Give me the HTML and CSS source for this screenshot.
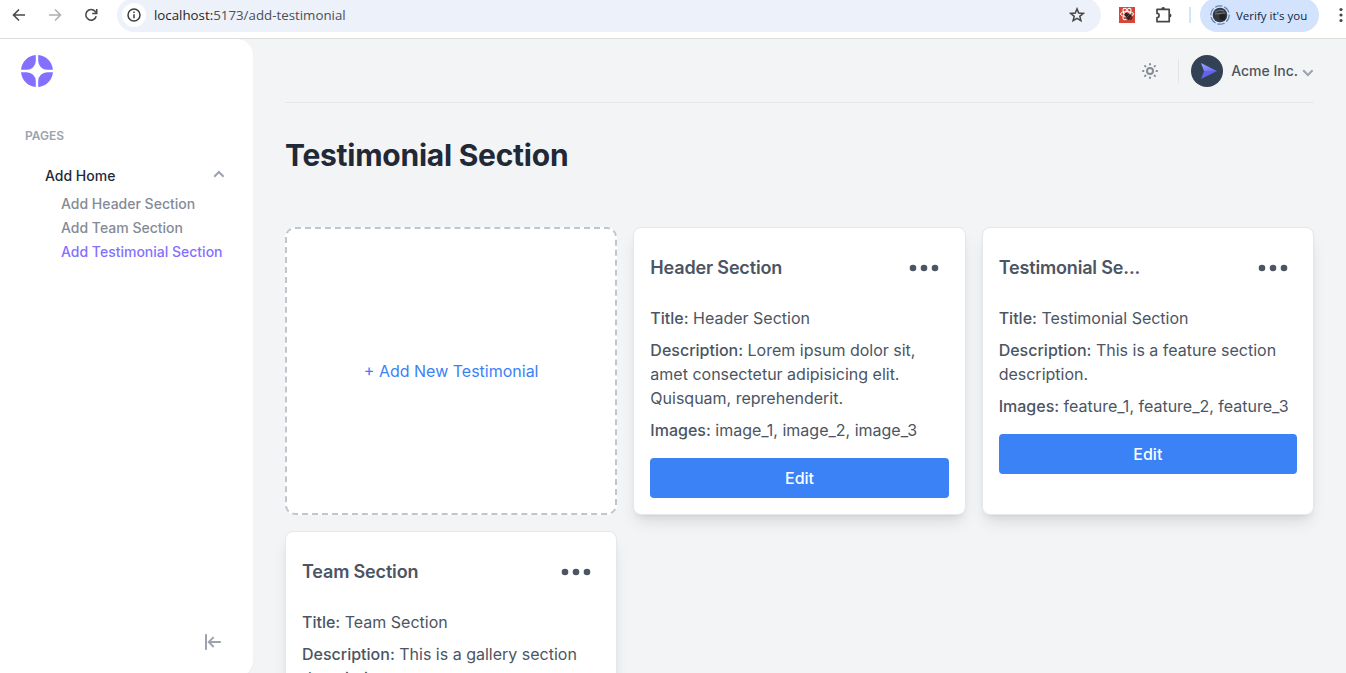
FILE: index.html
```html
<!DOCTYPE html>
<html lang="en">
<head>
<meta charset="utf-8">
<title>Testimonial Section</title>
<link rel="stylesheet" href="styles.css">
</head>
<body>
<header class="browser">
  <div class="nav-icons">
    <svg width="14" height="14" viewBox="0 0 14 14" fill="none" stroke="#474747" stroke-width="1.6"><path d="M13 7H1.800M7 1.500 1.500 7 7 12.500"/></svg>
    <svg width="14" height="14" viewBox="0 0 14 14" fill="none" stroke="#b0b0b0" stroke-width="1.600"><path d="M1 7h11.200M7 1.500 12.500 7 7 12.500"/></svg>
    <svg width="14" height="14" viewBox="0 0 14 14" fill="none" stroke="#474747" stroke-width="1.600"><path d="M12.200 8.300a5.300 5.300 0 1 1-1-4.800L12.600 5"/><path d="M12.700 1v4.500H8.200"/></svg>
  </div>
  <div class="address">
    <span class="site-info"><svg width="14" height="14" viewBox="0 0 14 14" fill="none" stroke="#3c3c3c" stroke-width="1.500"><circle cx="7" cy="7" r="6"/><path d="M7 6.200v4M7 3.500V5"/></svg></span>
    <span class="url"><b>localhost:</b>5173/add-testimonial</span>
    <svg class="star" width="16" height="16" viewBox="0 0 16 16" fill="none" stroke="#474747" stroke-width="1.500"><path d="m8 1.900 1.700 4.200 4.600.3-3.500 2.900 1.100 4.400L8 11.300l-3.900 2.400 1.100-4.400-3.500-2.900 4.600-.3z"/></svg>
  </div>
  <svg class="ext" width="16" height="16" viewBox="0 0 16 16"><path fill="#d8463a" d="M0 0h16v16H0z"/><g fill="none" stroke="#fff" stroke-width="1"><ellipse cx="8" cy="7" rx="6.500" ry="2.500"/><ellipse cx="8" cy="7" rx="6.300" ry="2.500" transform="rotate(60 8 7)"/><ellipse cx="8" cy="7" rx="6.300" ry="2.500" transform="rotate(120 8 7)"/></g><ellipse cx="10" cy="10" rx="3.500" ry="3" fill="#31201d" transform="rotate(40 10 10)"/><circle cx="7" cy="7.500" r="1.700" fill="#31201d"/><path d="m7 11 4-4M10 13l3-4" stroke="#b54a3d" stroke-width=".7"/></svg>
  <svg class="puzzle" width="18" height="18" viewBox="0 0 18 18"><path fill="none" stroke="#474747" stroke-width="1.700" stroke-linejoin="round" d="M2 3.300h12.200v12.400H2v-4.100a2.100 2.100 0 0 0 0-4.200z"/><path fill="#474747" d="M6.200 3a2 2 0 0 1 4 0zM14.500 7.400a2 2 0 0 1 0 4z"/></svg>
  <span class="bar"></span>
  <div class="profile">
    <svg width="20" height="20" viewBox="0 0 20 20"><circle cx="10" cy="10" r="9.200" fill="none" stroke="#6583b5" stroke-width="1.200" stroke-dasharray="7.500 2"/><circle cx="10" cy="10" r="7.300" fill="#35393f"/><path d="M5 7q4-3 9-1M5 9l10-1" stroke="#737981" fill="none"/><circle cx="12.500" cy="12" r="3.300" fill="#202126"/></svg>
    <span>Verify it's you</span>
  </div>
  <svg class="kebab" width="4" height="16" viewBox="0 0 4 16" fill="#474747"><circle cx="2" cy="2.500" r="1.600"/><circle cx="2" cy="8" r="1.600"/><circle cx="2" cy="13.500" r="1.600"/></svg>
</header>
<div class="app">
  <aside class="sidebar">
    <svg class="logo" width="32" height="32" viewBox="0 0 32 32" fill="#8470ff"><path d="M31.956 14.8C31.372 6.920 25.080.628 17.200.044V5.760a9.040 9.040 0 0 0 9.040 9.040h5.716ZM14.800 26.240v5.716C6.920 31.372.630 25.080.044 17.200H5.760a9.040 9.040 0 0 1 9.040 9.040Zm11.440-9.040h5.716c-.584 7.880-6.876 14.172-14.756 14.756V26.240a9.040 9.040 0 0 1 9.040-9.040ZM.044 14.800C.630 6.920 6.920.628 14.800.044V5.760a9.040 9.040 0 0 1-9.040 9.040H.044Z"/></svg>
    <h3 class="pages">Pages</h3>
    <div class="group"><span>Add Home</span>
      <svg width="12" height="12" viewBox="0 0 12 12" fill="#9ca3af"><path d="M5.900 .6 11.300 6 9.900 7.400l-4-4-4 4L.5 6z"/></svg>
    </div>
    <ul class="links">
      <li>Add Header Section</li>
      <li>Add Team Section</li>
      <li class="active">Add Testimonial Section</li>
    </ul>
    <svg class="collapse" width="16" height="16" viewBox="0 0 16 16" fill="#9ca3af"><path d="M15 7.100H6.100l3.300-3.300L8 2.400 2.400 8 8 13.700l1.400-1.400L6.100 9H15c.6 0 1-.4 1-1s-.4-.9-1-.9ZM1 16c.6 0 1-.4 1-1V1c0-.6-.4-1-1-1S0 .4 0 1v14c0 .6.400 1 1 1Z"/></svg>
  </aside>
  <main class="main">
    <div class="topbar">
      <svg class="sun" width="16" height="16" viewBox="0 0 16 16" fill="#858b96"><path d="M8 0a1 1 0 0 1 1 1v.5a1 1 0 1 1-2 0V1a1 1 0 0 1 1-1Z"/><path d="M12 8a4 4 0 1 1-8 0 4 4 0 0 1 8 0Zm-4 2a2 2 0 1 0 0-4 2 2 0 0 0 0 4Z" fill-rule="evenodd"/><path d="M13.657 3.757a1 1 0 0 0-1.414-1.414l-.354.354a1 1 0 0 0 1.414 1.414l.354-.354ZM13.500 8a1 1 0 0 1 1-1h.5a1 1 0 1 1 0 2h-.5a1 1 0 0 1-1-1ZM13.303 11.889a1 1 0 0 0-1.414 1.414l.354.354a1 1 0 0 0 1.414-1.414l-.354-.354ZM8 13.500a1 1 0 0 1 1 1v.5a1 1 0 1 1-2 0v-.5a1 1 0 0 1 1-1ZM4.111 13.303a1 1 0 1 0-1.414-1.414l-.354.354a1 1 0 1 0 1.414 1.414l.354-.354ZM0 8a1 1 0 0 1 1-1h.5a1 1 0 0 1 0 2H1a1 1 0 0 1-1-1ZM3.757 2.343a1 1 0 1 0-1.414 1.414l.354.354a1 1 0 1 0 1.414-1.414l-.354-.354Z"/></svg>
      <span class="rule"></span>
      <svg class="avatar" width="32" height="32" viewBox="0 0 32 32"><defs><linearGradient id="wing" x1="0" y1="0" x2="1" y2="1"><stop stop-color="#a5a4ff"/><stop offset="1" stop-color="#6366f1"/></linearGradient></defs><circle cx="16" cy="16" r="16" fill="#334155"/><path fill="url(#wing)" d="m10 8 16 8H13z"/><path fill="#6662e8" d="m10 24 16-8H13z"/></svg>
      <span class="org">Acme Inc.</span>
      <svg class="down" width="12" height="12" viewBox="0 0 12 12" fill="#9ca3af"><path d="M5.900 11.400.5 6l1.400-1.400 4 4 4-4L11.300 6z"/></svg>
    </div>
    <h1>Testimonial Section</h1>
    <div class="grid">
      <div class="add">+ Add New Testimonial</div>
      <article class="card">
        <div class="head"><h2>Header Section</h2><svg width="30" height="8" viewBox="0 0 30 8"><circle cx="4" cy="4" r="3.300"/><circle cx="15" cy="4" r="3.300"/><circle cx="26" cy="4" r="3.300"/></svg></div>
        <p><strong>Title:</strong> Header Section</p>
        <p><strong>Description:</strong> Lorem ipsum dolor sit, amet consectetur adipisicing elit. Quisquam, reprehenderit.</p>
        <p><strong>Images:</strong> image_1, image_2, image_3</p>
        <button class="edit">Edit</button>
      </article>
      <article class="card">
        <div class="head"><h2>Testimonial Se...</h2><svg width="30" height="8" viewBox="0 0 30 8"><circle cx="4" cy="4" r="3.300"/><circle cx="15" cy="4" r="3.300"/><circle cx="26" cy="4" r="3.300"/></svg></div>
        <p><strong>Title:</strong> Testimonial Section</p>
        <p><strong>Description:</strong> This is a feature section description.</p>
        <p><strong>Images:</strong> feature_1, feature_2, feature_3</p>
        <button class="edit">Edit</button>
      </article>
      <article class="card">
        <div class="head"><h2>Team Section</h2><svg width="30" height="8" viewBox="0 0 30 8"><circle cx="4" cy="4" r="3.300"/><circle cx="15" cy="4" r="3.300"/><circle cx="26" cy="4" r="3.300"/></svg></div>
        <p><strong>Title:</strong> Team Section</p>
        <p><strong>Description:</strong> This is a gallery section description.</p>
      </article>
    </div>
  </main>
</div>
</body>
</html>
```
FILE: styles.css
```css
* { box-sizing: border-box; }
body, h1, h2, h3, p, ul { margin: 0; padding: 0; }
body {
  height: 673px;
  overflow: hidden;
  display: flex;
  flex-direction: column;
  font-family: Inter, "Liberation Sans", sans-serif;
  background: #f3f4f6;
  color: #4b5563;
}
svg { display: block; flex: none; }

/* Browser toolbar */
.browser {
  flex: none;
  height: 39px;
  padding-bottom: 8px;
  display: flex;
  align-items: center;
  background: #fff;
  border-bottom: 1px solid #dedfdc;
  font-family: "Open Sans", "Noto Sans", sans-serif;
}
.nav-icons { display: flex; gap: 22px; padding-left: 12px; width: 117px; flex: none; }
.address {
  flex: none;
  width: 984px;
  height: 34px;
  padding: 0 16px 0 5px;
  display: flex;
  align-items: center;
  background: #edf1fa;
  border-radius: 17px;
}
.site-info {
  width: 24px;
  height: 24px;
  display: grid;
  place-items: center;
  background: #fff;
  border-radius: 50%;
}
.url { margin-left: 8px; font-size: 13.3px; color: #4c4f54; white-space: nowrap; }
.url b { font-weight: 400; color: #1f1f1f; }
.star { margin-left: auto; }
.ext { margin-left: 18px; }
.puzzle { margin-left: 20px; }
.bar { width: 2px; height: 16px; margin-left: 16px; background: #d3e3fd; }
.profile {
  flex: none;
  width: 119px;
  height: 34px;
  margin-left: 9px;
  padding-left: 10px;
  display: flex;
  align-items: center;
  gap: 6px;
  background: #d3e3fd;
  border-radius: 17px;
  color: #0b1f43;
  font-size: 11.500px;
  white-space: nowrap;
}
.kebab { margin-left: 20px; }

/* Application shell */
.app { flex: 1; min-height: 0; display: flex; }
.sidebar {
  flex: none;
  width: 253px;
  height: 638px;
  padding: 16px 28px 27px 21px;
  display: flex;
  flex-direction: column;
  background: #fff;
  border-radius: 0 16px 16px 0;
  box-shadow: 0 1px 2px rgba(0, 0, 0, .04);
}
.pages {
  margin: 40px 0 0 4px;
  font-size: 12px;
  line-height: 18px;
  font-weight: 600;
  text-transform: uppercase;
  color: #9ca3af;
}
.group {
  margin: 19px 0 0 24px;
  display: flex;
  justify-content: space-between;
  font-size: 14px;
  line-height: 24px;
  font-weight: 500;
  color: #1f2937;
}
.group svg { margin-top: 6px; }
.links {
  margin: 4px 0 0 40px;
  list-style: none;
  font-size: 14px;
  line-height: 24px;
  font-weight: 500;
  color: #858b96;
  white-space: nowrap;
}
.links .active { color: #8470ff; }
.collapse { margin: auto 4px 0 auto; }

.main { flex: 1; min-width: 0; padding: 0 32px; }
.topbar {
  height: 64px;
  display: flex;
  align-items: center;
  justify-content: flex-end;
  border-bottom: 1px solid #e5e7eb;
}
.rule { width: 1px; height: 24px; margin: 0 12px 0 20px; background: #e1e3e7; }
.org { margin: 0 4px 0 8px; font-size: 14px; font-weight: 500; color: #4b5563; }
h1 {
  margin: 32px 0 0;
  font-size: 30px;
  line-height: 40px;
  font-weight: 700;
  letter-spacing: -.25px;
  color: #1f2937;
}

/* Section cards */
.grid {
  margin-top: 52px;
  display: grid;
  grid-template-columns: repeat(3, minmax(0, 1fr));
  grid-auto-rows: 288px;
  gap: 16px;
}
.add {
  display: grid;
  place-items: center;
  background: #fff;
  border: 2px dashed #c0c5ce;
  border-radius: 10px;
  color: #3b82f6;
  font-size: 16px;
}
.card {
  padding: 16px;
  background: #fff;
  border: 1px solid #e5e7eb;
  border-radius: 8px;
  box-shadow: 0 10px 15px -3px rgba(0, 0, 0, .1), 0 4px 6px -4px rgba(0, 0, 0, .1);
  font-size: 16px;
  line-height: 24px;
}
.head {
  height: 48px;
  margin-bottom: 14px;
  padding-right: 9.5px;
  display: flex;
  align-items: center;
  justify-content: space-between;
  fill: #4b5563;
}
h2 { font-size: 18px; line-height: 28px; font-weight: 600; letter-spacing: -.16px; }
.card p { margin-bottom: 8px; }
.card strong { font-weight: 500; }
.edit {
  display: block;
  width: 100%;
  height: 40px;
  margin-top: 16px;
  border: 0;
  border-radius: 4px;
  background: #3b82f6;
  color: #fff;
  font: 500 16px/24px Inter, sans-serif;
}
```
